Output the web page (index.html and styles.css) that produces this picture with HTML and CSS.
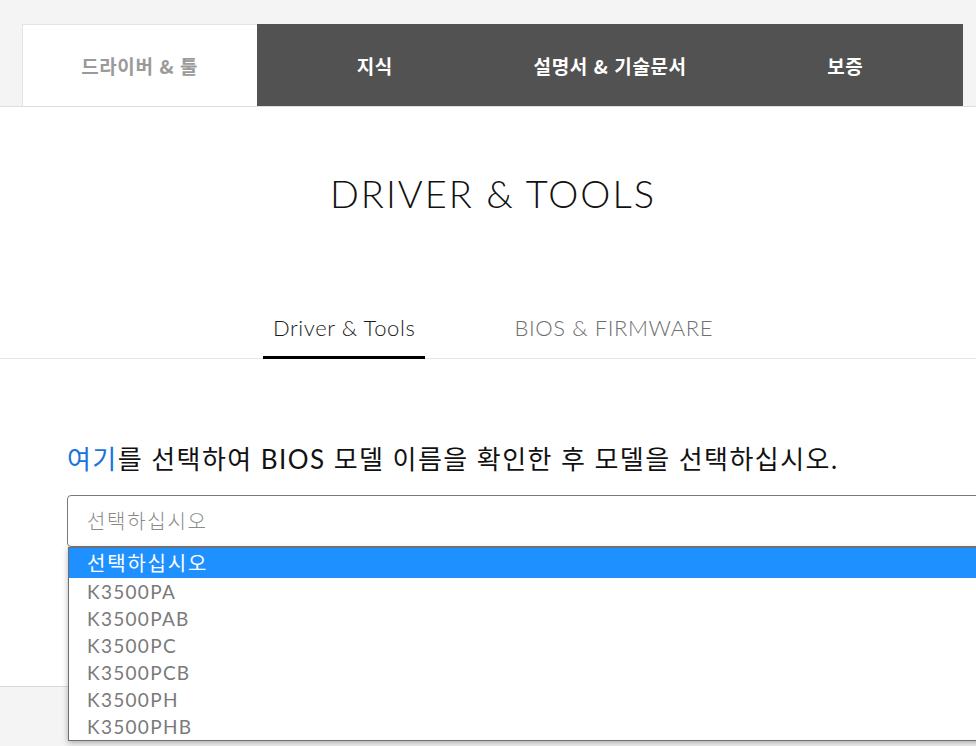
FILE: index.html
```html
<!DOCTYPE html>
<html lang="ko">
<head>
<meta charset="utf-8">
<title>Driver &amp; Tools</title>
<link rel="stylesheet" href="styles.css">
</head>
<body>
<div class="page">
  <header class="topbar">
    <nav class="topnav">
      <a class="toptab toptab-active">드라이버 &amp; 툴</a>
      <a class="toptab">지식</a>
      <a class="toptab">설명서 &amp; 기술문서</a>
      <a class="toptab">보증</a>
    </nav>
  </header>
  <main class="main">
    <h1 class="title">DRIVER &amp; TOOLS</h1>
    <nav class="subnav">
      <a class="subtab subtab-active">Driver &amp; Tools</a>
      <a class="subtab">BIOS &amp; FIRMWARE</a>
    </nav>
    <section class="content">
      <p class="hint"><a class="hint-link">여기</a>를 선택하여 BIOS 모델 이름을 확인한 후 모델을 선택하십시오.</p>
      <div class="select-wrap">
        <div class="select">선택하십시오</div>
        <ul class="options">
          <li class="option option-selected">선택하십시오</li>
          <li class="option">K3500PA</li>
          <li class="option">K3500PAB</li>
          <li class="option">K3500PC</li>
          <li class="option">K3500PCB</li>
          <li class="option">K3500PH</li>
          <li class="option">K3500PHB</li>
        </ul>
      </div>
    </section>
  </main>
  <footer class="footer"></footer>
</div>
</body>
</html>
```
FILE: styles.css
```css
html, body {
  margin: 0;
  padding: 0;
  background: #f4f4f4;
  overflow: hidden;
  font-family: "Lato", "Noto Sans CJK KR", sans-serif;
}
.page {
  width: 976px;
  height: 746px;
  overflow: hidden;
}
.topbar {
  padding: 24px 13px 0 22px;
  border-bottom: 1px solid #dedede;
}
.topnav {
  display: flex;
  height: 82px;
}
.toptab {
  flex: 1;
  display: flex;
  align-items: center;
  justify-content: center;
  background: #525252;
  color: #ffffff;
  font-family: "Noto Sans CJK KR", sans-serif;
  font-weight: 700;
  font-size: 19px;
  letter-spacing: 0.6px;
}
.toptab-active {
  background: #ffffff;
  color: #9a9a9a;
  box-shadow: inset 1px 1px 0 #e4e4e4;
}
.main {
  background: #ffffff;
  height: 580px;
  padding-top: 64px;
  box-sizing: border-box;
  border-bottom: 1px solid #d9d9d9;
}
.title {
  margin: 0;
  padding-left: 10px;
  text-align: center;
  font-weight: 300;
  font-size: 38px;
  line-height: 44px;
  color: #111111;
  letter-spacing: 2px;
}
.subnav {
  margin-top: 87px;
  padding-left: 10px;
  display: flex;
  justify-content: center;
  gap: 79px;
  border-bottom: 1px solid #e5e5e5;
}
.subtab {
  padding: 14px 10px 16px;
  line-height: 24px;
  font-size: 22px;
  font-weight: 300;
  letter-spacing: 0.6px;
  color: #6f6f6f;
  border-bottom: 3px solid transparent;
  margin-bottom: -1px;
}
.subtab-active {
  color: #1a1a1a;
  border-bottom-color: #000000;
}
.content {
  padding-left: 67px;
}
.hint {
  margin: 85px 0 21px;
  font-size: 26px;
  line-height: 30px;
  letter-spacing: 1.45px;
  color: #111111;
  white-space: nowrap;
}
.hint-link {
  color: #1a73d9;
}
.select-wrap {
  position: relative;
  width: 960px;
}
.select {
  height: 50px;
  border: 1px solid #7a7a7a;
  border-radius: 4px;
  padding-left: 19px;
  font-family: "Noto Sans CJK KR", sans-serif;
  font-weight: 300;
  font-size: 20px;
  letter-spacing: 1.7px;
  line-height: 50px;
  color: #8a8a8a;
}
.options {
  position: absolute;
  top: 52px;
  left: 1px;
  right: 0;
  margin: 0;
  padding: 0;
  list-style: none;
  background: #ffffff;
  border: 1px solid #6f6f6f;
  box-shadow: 0 2px 6px rgba(0, 0, 0, 0.3);
  z-index: 5;
}
.option {
  height: 27px;
  line-height: 27px;
  padding-left: 18px;
  font-size: 19px;
  letter-spacing: 1.3px;
  color: #7a7a7a;
}
.option-selected {
  height: 30px;
  line-height: 30px;
  background: #1e90ff;
  color: #ffffff;
  font-family: "Noto Sans CJK KR", sans-serif;
  font-weight: 400;
  font-size: 20px;
  letter-spacing: 1.8px;
}
.footer {
  height: 60px;
}
```
